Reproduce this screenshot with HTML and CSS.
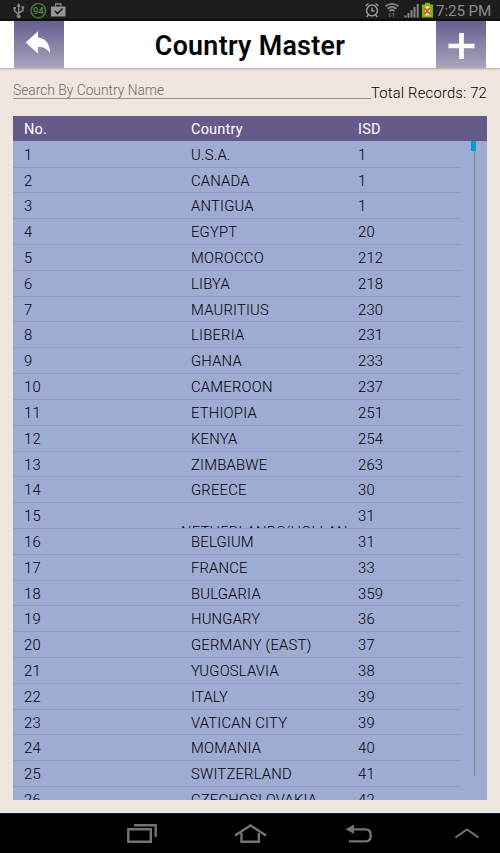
FILE: index.html
```html
<!DOCTYPE html>
<html lang="en">
<head>
<meta charset="utf-8">
<title>Country Master</title>
<link rel="stylesheet" href="styles.css">
</head>
<body>
<div class="status">
  <svg class="status-left" width="70" height="20" viewBox="0 0 70 20" fill="none" stroke="#858585">
    <path d="M18.700 4v13M14.500 8v3l4.200 3M23 7.500v3l-4.300 2.500" stroke-width="1.500"/>
    <path d="M16.500 6.500l2.200-3.500 2.200 3.500z M13.300 7h2.700v2.300h-2.700z M21.500 6.300h2.700v2.300h-2.700z" fill="#858585" stroke="none"/>
    <circle cx="18.700" cy="16.300" r="2" fill="#858585" stroke="none"/>
    <circle cx="38.300" cy="10.700" r="7.200" stroke="#43752c" stroke-width="1.600"/>
    <text x="38.300" y="14.200" class="battery-number" text-anchor="middle">94</text>
    <path d="M51 6.500h14.500v10h-14.500z" fill="#969696" stroke="none"/>
    <path d="M55.500 6.500v-2.500h5.500v2.500" stroke-width="1.300"/>
    <path d="M55 11l2.500 2.500 5-5" stroke="#1d1d1d" stroke-width="1.700"/>
  </svg>
  <svg class="status-right" width="72" height="20" viewBox="363 0 72 20" fill="none" stroke="#999">
    <circle cx="372" cy="10.500" r="5.400" stroke-width="1.500"/>
    <path d="M372 7.500v3.500h2.500M365.500 6l3-2.500M375.500 3.500l3 2.500M368.300 15l-1.500 2M375.700 15l1.500 2" stroke-width="1.400"/>
    <path d="M385.500 6.300q6.500-5 13 0M387.500 8.700q4.500-3.500 9 0M389.500 11q2.500-2 5 0" stroke="#858585" stroke-width="1.800"/>
    <path d="M389.800 17v-4M388.300 15.500l1.500 1.500 1.500-1.500M393.500 13v4M392 14.500l1.500-1.500 1.500 1.500" stroke="#626262" stroke-width="1"/>
    <path d="M405.500 17.500v-2M408.500 17.500v-4.500M411.500 17.500v-7.500M414.500 17.500v-10.500M417.700 17.500v-13.500" stroke="#858585" stroke-width="2"/>
    <path d="M422 4.500h3v-1.800h5v1.800h3v13h-11z" fill="#80b800" stroke="none"/>
    <path d="M425 6.500h5v9h-5z" fill="#e8e4cf" stroke="none"/>
    <path d="M424.800 8l5 6M429.800 8l-5 6" stroke="#e34628" stroke-width="1.800"/>
  </svg>
  <time>7:25 PM</time>
</div>
<header class="header">
  <button class="action" aria-label="Back"><svg width="50" height="47" viewBox="0 0 50 47"><path d="M11.700 21.500 24 10.200v6.300c8 .5 12 7 12.200 15.800-3.700-5.200-7-6.300-12.200-6.300v6.500z" fill="#fff"/></svg></button>
  <h1>Country Master</h1>
  <button class="action" aria-label="Add"><svg width="50" height="47" viewBox="0 0 50 47"><path d="M25.500 12v26M12.500 25h26" stroke="#fff" stroke-width="4.700"/></svg></button>
</header>
<div class="search">
  <div class="field"><span>Search By Country Name</span></div>
  <div class="total"><span>Total Records: 72</span></div>
</div>
<main class="table">
  <div class="row heading"><span>No.</span><span>Country</span><span>ISD</span></div>
  <div class="body">
    <div class="rows">
      <div class="row"><span>1</span><span>U.S.A.</span><span>1</span></div>
      <div class="row"><span>2</span><span>CANADA</span><span>1</span></div>
      <div class="row"><span>3</span><span>ANTIGUA</span><span>1</span></div>
      <div class="row"><span>4</span><span>EGYPT</span><span>20</span></div>
      <div class="row"><span>5</span><span>MOROCCO</span><span>212</span></div>
      <div class="row"><span>6</span><span>LIBYA</span><span>218</span></div>
      <div class="row"><span>7</span><span>MAURITIUS</span><span>230</span></div>
      <div class="row"><span>8</span><span>LIBERIA</span><span>231</span></div>
      <div class="row"><span>9</span><span>GHANA</span><span>233</span></div>
      <div class="row"><span>10</span><span>CAMEROON</span><span>237</span></div>
      <div class="row"><span>11</span><span>ETHIOPIA</span><span>251</span></div>
      <div class="row"><span>12</span><span>KENYA</span><span>254</span></div>
      <div class="row"><span>13</span><span>ZIMBABWE</span><span>263</span></div>
      <div class="row"><span>14</span><span>GREECE</span><span>30</span></div>
      <div class="row"><span>15</span><span class="wrapped">NETHERLANDS(HOLLAN</span><span>31</span></div>
      <div class="row"><span>16</span><span>BELGIUM</span><span>31</span></div>
      <div class="row"><span>17</span><span>FRANCE</span><span>33</span></div>
      <div class="row"><span>18</span><span>BULGARIA</span><span>359</span></div>
      <div class="row"><span>19</span><span>HUNGARY</span><span>36</span></div>
      <div class="row"><span>20</span><span>GERMANY (EAST)</span><span>37</span></div>
      <div class="row"><span>21</span><span>YUGOSLAVIA</span><span>38</span></div>
      <div class="row"><span>22</span><span>ITALY</span><span>39</span></div>
      <div class="row"><span>23</span><span>VATICAN CITY</span><span>39</span></div>
      <div class="row"><span>24</span><span>MOMANIA</span><span>40</span></div>
      <div class="row"><span>25</span><span>SWITZERLAND</span><span>41</span></div>
      <div class="row"><span>26</span><span>CZECHOSLOVAKIA</span><span>42</span></div>
    </div>
    <div class="scrollbar"><div class="thumb"></div></div>
  </div>
</main>
<nav class="nav">
  <svg width="500" height="39" viewBox="0 814 500 39" fill="none" stroke="#747474" stroke-width="2.400">
    <path d="M128.300 829.200h22.500v12.600h-22.500zM134 825.200h21.700v11.500"/>
    <path d="M235 835.500l15.500-10 15.500 10M241.500 833v8.800h17.300v-8.800"/>
    <path d="M350 829.400h15.500q5.200 0 5.200 6t-5.200 6h-16.500"/>
    <path d="M345.500 829.300l8.500-4.800v9.200z" fill="#747474" stroke="none"/>
    <path d="M455.500 837.500l11.500-8 11.500 8" stroke-width="2"/>
  </svg>
</nav>
</body>
</html>
```
FILE: styles.css
```css
* { box-sizing: border-box; }
body {
  margin: 0;
  width: 500px;
  height: 853px;
  overflow: hidden;
  display: flex;
  flex-direction: column;
  background: #efe6dd;
  font-family: Roboto, sans-serif;
  font-size: 14.8px;
  font-weight: 300;
  color: #000;
}
svg { display: block; flex: none; }
.status {
  height: 21px;
  flex: none;
  display: flex;
  background: #1d1d1d;
  border-bottom: 2px solid #080808;
  color: #8b8b8b;
}
.status-right { margin-left: 293px; }
.status time { margin-left: 1px; line-height: 22px; font-size: 15.2px; font-weight: 400; letter-spacing: -0.1px; white-space: nowrap; }
.battery-number { font-size: 9.5px; font-weight: 500; fill: #568b41; stroke: none; }
.header {
  height: 47px;
  flex: none;
  display: flex;
  justify-content: space-between;
  padding: 0 14px;
  background: #fff;
  box-shadow: 0 1px 2px #aaa6a2;
}
.action {
  width: 50px;
  height: 47px;
  padding: 0;
  border: 0;
  background: linear-gradient(#665e90, #aaa5bd);
}
h1 { margin: 0; font-size: 26.8px; font-weight: 600; letter-spacing: 0.3px; line-height: 50px; color: #050505; }
.search { height: 48px; flex: none; display: flex; padding: 0 13px; }
.field {
  width: 358px;
  height: 31px;
  border-bottom: 1px solid #9690b3;
  padding-top: 13px;
  line-height: 19px;
  font-size: 13.8px;
  color: #706c68;
}
.total { padding-top: 15px; line-height: 20px; letter-spacing: 0.2px; white-space: nowrap; }
.table { width: 474px; height: 684px; margin-left: 13px; flex: none; overflow: hidden; background: #9eabd3; }
.row {
  display: grid;
  grid-template-columns: 167px 167px 114px;
  height: 25.82px;
  padding-left: 11px;
  border-bottom: 1px solid #8f9cc5;
  line-height: 27px;
  letter-spacing: 0.2px;
  white-space: nowrap;
  overflow: hidden;
}
.heading {
  height: 25px;
  background: #645b8a;
  border: 0;
  color: #fff;
  font-weight: 400;
  font-size: 14.5px;
}
.body { height: 659px; display: flex; overflow: hidden; }
.rows { width: 448px; padding-top: 0.8px; }
.rows .row { grid-template-columns: 167px 167px 103px; }
.wrapped { margin-left: -10px; padding-top: 16px; }
.scrollbar { width: 5px; height: 635px; margin-left: 10px; background: linear-gradient(#858585, #858585) 3px 0 / 1px 100% no-repeat; }
.thumb { width: 5px; height: 10px; background: #079bd0; }
.nav { height: 40px; margin-top: auto; flex: none; background: #000; border-top: 1px solid #082535; }
```
